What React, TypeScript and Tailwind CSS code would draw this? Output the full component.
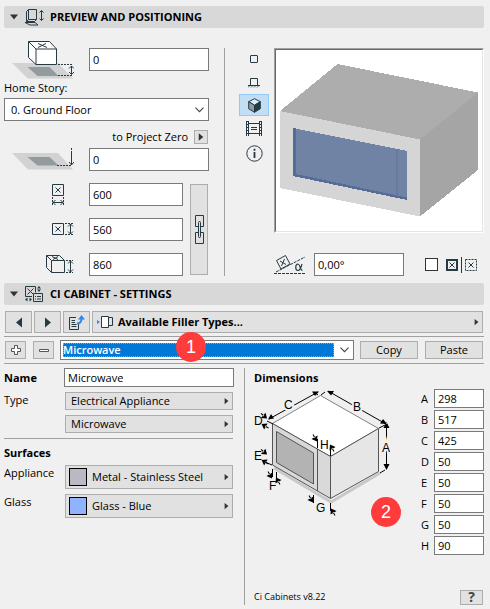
import { useState } from "react";
import type { ReactNode } from "react";

function Triangle({ dir, className = "" }: { dir: "left" | "right" | "down"; className?: string }) {
  const d = { left: "M7 0v10L1 5z", right: "M1 0v10l6-5z", down: "M0 2.500h8l-4 5z" }[dir];
  return (
    <svg viewBox="0 0 8 10" className={`shrink-0 ${className}`} fill="currentColor" aria-hidden="true">
      <path d={d} />
    </svg>
  );
}

function Chevron() {
  return (
    <svg viewBox="0 0 9 6" className="pointer-events-none h-[6px] w-[9px] shrink-0" fill="none" stroke="#444" strokeWidth="1.1" aria-hidden="true">
      <path d="M.5.7l4 4 4-4" />
    </svg>
  );
}

function SectionHeader({ title, icon }: { title: string; icon: ReactNode }) {
  return (
    <h2>
      <button type="button" className="flex h-[22px] w-full items-center rounded-[2px] bg-[#d8d8d8] pl-[6px] text-left font-bold">
        <Triangle dir="down" className="h-[10px] w-2 text-[#333]" />
        <span className="flex w-8 shrink-0 justify-center">{icon}</span>
        {title}
      </button>
    </h2>
  );
}

function NumberField({ label, value, className }: { label: string; value: string; className: string }) {
  return (
    <input
      type="text"
      aria-label={label}
      defaultValue={value}
      className={`h-[23px] min-w-0 border border-[#7a7a7a] bg-white px-[3px] outline-none ${className}`}
    />
  );
}

function MenuButton({ children, label, className }: { children: ReactNode; label?: string; className: string }) {
  return (
    <button type="button" aria-label={label} className={`flex min-w-0 flex-1 items-center border border-[#adadad] bg-[#e1e1e1] pr-[3px] text-left ${className}`}>
      <span className="flex flex-1 items-center">{children}</span>
      <Triangle dir="right" className="h-2 w-[5px] text-[#333]" />
    </button>
  );
}

const ink = "#263a44";

function PositionIcon() {
  return (
    <svg width="19" height="17" viewBox="0 0 19 17" fill="none" stroke={ink} aria-hidden="true">
      <path d="M3.5.5h8v10h-8zM3.5.5l-2 2v10l2-2M1.5 12.5h8l2-2" />
      <path d="M0 13.5h10l3 2.500H5z" />
      <path d="M16.500 1.500v10M14.500 3.500l2-2 2 2M14.500 9.500l2 2 2-2" />
    </svg>
  );
}

function CabinetIcon() {
  return (
    <svg width="18" height="17" viewBox="0 0 18 17" fill="none" stroke={ink} aria-hidden="true">
      <path d="M7 10.500H.5V.5h10v6M2.500 2.500l6 6M8.500 2.500l-6 6" />
      <path d="M8.500 7.500h9v8h-9zM10 10.500h1M12 10.500h4M10 13h1M12 13h4" />
      <path d="M14 0l2 2.500h-4zM14 6l2-2.500h-4zM0 13.500l2.500-2v4zM7 13.500l-2.500-2v4z" fill={ink} stroke="none" />
    </svg>
  );
}

function StoryIcon() {
  return (
    <svg width="62" height="38" viewBox="0 0 62 38" fill="none" stroke={ink} className="shrink-0" aria-hidden="true">
      <path d="M0 22h46l15 15.500H16z" fill="#d2d2d2" stroke="none" />
      <path d="M15.500 26h22l9 9h-21z" fill="#939b9f" stroke="none" />
      <path d="M16.500.500h21l7 7.500v15.500h-20.500l-7.500-7z" fill="#fff" />
      <path d="M16.500.500l7.500 7.500h20.500M24 8v15.500M26 2.500l9 4M34 2.500l-8 4" />
      <path d="M46 23.500h14M46 34.500h14" strokeDasharray="2 1" />
      <path d="M59.500 25v8M57 27.500l2.500-2.500 2.500 2.500M57 31l2.500 2.500 2.500-2.500" />
    </svg>
  );
}

function ZeroIcon() {
  return (
    <svg width="62" height="23" viewBox="0 0 62 23" fill="none" stroke={ink} className="shrink-0" aria-hidden="true">
      <path d="M0 5h46l15 16.500H16z" fill="#d2d2d2" stroke="none" />
      <path d="M15.500 9h22l9 8.500h-21z" fill="#939b9f" stroke="none" />
      <path d="M45 17.500h14" strokeDasharray="2 1" />
      <path d="M59.500 0v5" strokeDasharray="2 1" />
      <path d="M59.500 5v12M57 14l2.500 3 2.500-3" />
    </svg>
  );
}

function WidthIcon() {
  return (
    <svg width="12" height="21" viewBox="0 0 12 21" fill="none" stroke={ink} aria-hidden="true">
      <path d="M.5.500h11v11H.500zM3.500 3.500l5 5M8.500 3.500l-5 5M1 18.500h10M3.500 16L1 18.500 3.500 21M8.500 16l2.500 2.500L8.500 21" />
      <path d="M.500 13v8M11.500 13v8" strokeDasharray="2 1" />
    </svg>
  );
}

function DepthIcon() {
  return (
    <svg width="22" height="13" viewBox="0 0 22 13" fill="none" stroke={ink} aria-hidden="true">
      <path d="M.5.500h11v11H.500zM3.500 3.500l5 5M8.500 3.500l-5 5M18.500 1v10M16 3.500L18.500 1 21 3.500M16 8.500l2.500 2.500L21 8.500" />
      <path d="M13 .5h8M13 11.500h8" strokeDasharray="2 1" />
    </svg>
  );
}

function HeightIcon() {
  return (
    <svg width="28" height="19" viewBox="0 0 28 19" fill="none" stroke={ink} aria-hidden="true">
      <path d="M.500.500h13l5 5v12h-13l-5-5zM.500.500l5 5h13M5.500 5.500v12M6 1.500l6 3M12 1.500l-5 3M24.500 6v11M22 8.500L24.500 6 27 8.500M22 14.500l2.500 2.500 2.500-2.500" />
      <path d="M20 5.500h7M20 17.500h7" strokeDasharray="2 1" />
    </svg>
  );
}

function ChainIcon() {
  return (
    <svg width="9" height="29" viewBox="0 0 9 29" fill="none" stroke={ink} className="shrink-0" aria-hidden="true">
      <path d="M3 11.500H.500V.500h8v11H6M3 17.500H.500v11h8v-11H6" />
      <path d="M3.500 21.500V7.500l1-1.500 1 1.500v14l-1 1.500z" />
    </svg>
  );
}

function AngleIcon() {
  return (
    <svg width="31" height="19" viewBox="0 0 31 19" fill="none" stroke={ink} className="shrink-0" aria-hidden="true">
      <path d="M0 18.500h31M2 17L31 2" strokeDasharray="3 1" />
      <path d="M2.500 5.500l9-5 4.500 8.500-9 5zM6 6l6 3.500M10.500 4l-3 7" />
      <path d="M28 9c-1 4-2.500 6.500-4 6.500-3 0-3-6.500 0-6.500 2.200 0 2 6.500 4.500 6.500" strokeWidth="1.200" />
    </svg>
  );
}

const views: { name: string; size: string; icon: ReactNode }[] = [
  {
    name: "2D symbol",
    size: "h-[22px]",
    icon: (
      <svg width="8" height="8" viewBox="0 0 8 8" fill="none" stroke={ink} aria-hidden="true">
        <rect x=".5" y=".5" width="7" height="7" rx=".5" />
      </svg>
    ),
  },
  {
    name: "Elevation",
    size: "h-6",
    icon: (
      <svg width="12" height="11" viewBox="0 0 12 11" fill="none" stroke={ink} aria-hidden="true">
        <path d="M2.500 8V1.500h7V8M0 8.500h12" />
        <path d="M0 10.500l2-2M3 10.500l2-2M6 10.500l2-2M9 10.500l2-2" strokeWidth=".8" />
      </svg>
    ),
  },
  {
    name: "3D view",
    size: "h-[22px]",
    icon: (
      <svg width="13" height="15" viewBox="0 0 13 15" stroke={ink} strokeLinejoin="round" aria-hidden="true">
        <path d="M6.500.700l5.800 3-5.800 3.600L.700 3.700z" fill="#d9edfc" />
        <path d="M.700 3.700l5.800 3.600v7L.700 10.700z" fill="#939b9f" />
        <path d="M12.300 3.700L6.500 7.300v7l5.800-3.600z" fill={ink} />
      </svg>
    ),
  },
  {
    name: "Preview picture",
    size: "h-6",
    icon: (
      <svg width="16" height="15" viewBox="0 0 16 15" fill="none" stroke={ink} aria-hidden="true">
        <path d="M.500 0v15M2.500 0v15M13.500 0v15M15.500 0v15M3 2.500h10M3 12.500h10M5 6.500h6M5 8.500h6" />
        <path d="M1.500 0v15M14.500 0v15" strokeDasharray="1 2" />
      </svg>
    ),
  },
  {
    name: "Information",
    size: "h-[26px]",
    icon: (
      <svg width="17" height="17" viewBox="0 0 17 17" fill="none" stroke={ink} aria-hidden="true">
        <circle cx="8.500" cy="8.500" r="7.700" />
        <path d="M8.500 7v6M8.500 3.800v2" strokeWidth="1.800" />
      </svg>
    ),
  },
];

function Preview3D() {
  return (
    <div className="h-[185px] border border-b-white border-l-[#a0a0a0] border-r-white border-t-[#a0a0a0]">
      <div className="h-full border border-b-[#e3e3e3] border-l-[#696969] border-r-[#e3e3e3] border-t-[#696969] bg-white">
        <svg viewBox="276 50 206 181" className="h-full w-full" shapeRendering="crispEdges" role="img" aria-label="Microwave preview">
          <path d="M337.500 64L478 92.500 420 139.500 280 111z" fill="#adadad" />
          <path d="M280 111l140 28.500v77L280 188z" fill="#d5d5d5" />
          <path d="M420 139.500l58-47V170l-58 46.500z" fill="#a5a5a5" />
          <path d="M293 128l114 23v49l-114-24z" fill="#7083a4" />
          <path d="M293 128l3 .6V174l111 23.500v2.500l-114-24z" fill="#566c98" />
          <path d="M396 149h2v47h-2z" fill="#677a9d" />
        </svg>
      </div>
    </div>
  );
}

const dimensionArrows: [number, number, number, number][] = [
  [268, 418, 317, 391],
  [327, 390, 385, 423],
  [385.5, 424, 385.5, 468],
];

const ticks: [number, number, number][] = [
  [263, 415, 40], [264, 425, 210], [263, 451, 40], [264, 461, 210],
  [269, 474, 60], [277, 480, 240], [314, 437, 60], [331, 447, 240],
  [310, 498, 60], [332, 511, 240],
];

function DimensionDrawing() {
  return (
    <svg width="136" height="128" viewBox="253 388 136 128" fill="none" stroke="#555" role="img" aria-label="Microwave dimensions A to H">
      <path d="M273 467l57 34 49-29" stroke="#c8c8c8" strokeWidth="3" />
      <path d="M271.500 422.500l48-28 58 33-48 28z" fill="#fff" stroke="#808080" />
      <path d="M271.500 422.500l58 33v42l-58-33.500z" fill="#d9d9d9" />
      <path d="M275.500 430.500l37 21.500v31l-37-21.500z" fill="#b3b3b3" />
      <path d="M316.500 448v42" />
      <path d="M329.500 455.500l48-28v43l-48 27z" fill="#e6e6e6" />
      <g stroke="#000">
        {dimensionArrows.map(([x1, y1, x2, y2]) => (
          <path key={`${x1}-${y1}`} d={`M${x1} ${y1}L${x2} ${y2}`} />
        ))}
        <path d="M313 391l4 3M324 391l-4 3M378 427l6-3M379 472l5-3M266 420l6 3M264 461l7 3M271.500 468v8M275.500 471v8M316.500 438v9M329.500 446v9M312.500 494v8M329.500 502v8" />
      </g>
      <g fill="#000" stroke="none">
        <path d="M267 418.500l3-5.500 3 4.500zM318 390.500l-7 0 3 4.500zM326 390l7 0-3 4.500zM386 423l-7-.5 3-4.500zM385.500 421l-3 6h6zM385.500 469l-3-6h6z" />
        {ticks.map(([x, y, a]) => (
          <g key={`${x}-${y}`} transform={`translate(${x} ${y}) rotate(${a})`}>
            <path d="M4 0l-5-3.500v7zM-4-.5h4v1h-4z" />
          </g>
        ))}
      </g>
      <g stroke="#f0f0f0" strokeWidth="4" paintOrder="stroke" fill="#000" className="font-['Liberation_Sans',Arial,sans-serif] text-xs">
        <text x="283" y="408">C</text>
        <text x="352" y="410">B</text>
        <text x="381" y="451">A</text>
      </g>
      <g fill="#000" stroke="none" className="font-['Liberation_Sans',Arial,sans-serif] text-xs">
        <text x="253" y="424">D</text>
        <text x="253" y="459">E</text>
        <text x="268" y="489">F</text>
        <text x="319" y="448">H</text>
        <text x="315" y="511">G</text>
      </g>
    </svg>
  );
}

function Badge({ children, className }: { children: ReactNode; className: string }) {
  return (
    <span className={`absolute flex size-[30px] items-center justify-center rounded-full bg-[#ff3b3b] font-['Liberation_Sans',Arial,sans-serif] text-lg text-white ${className}`}>
      {children}
    </span>
  );
}

const dimensions = [
  ["A", "298"], ["B", "517"], ["C", "425"], ["D", "50"],
  ["E", "50"], ["F", "50"], ["G", "50"], ["H", "90"],
];

const toolButton = "flex shrink-0 items-center justify-center border border-[#adadad] bg-[#e1e1e1]";

export default function App() {
  const [mirrored, setMirrored] = useState(false);

  return (
    <main className="min-h-screen bg-[#f0f0f0] pb-1 pl-1 pr-[6px] pt-[6px] font-['Open_Sans','Noto_Sans',sans-serif] text-[11px] leading-4 text-black">
      <SectionHeader title="PREVIEW AND POSITIONING" icon={<PositionIcon />} />

      <section className="flex pb-[7px] pt-5">
        <div className="w-[205px] shrink-0">
          <div className="flex h-[23px] items-center justify-between pl-2">
            <StoryIcon />
            <NumberField label="Height to home story" value="0" className="w-[120px]" />
          </div>
          <label htmlFor="story" className="mt-[9px] block">Home Story:</label>
          <div className="mt-[2px] flex h-[23px] items-center border border-[#7a7a7a] bg-white pr-1">
            <select id="story" className="-mr-[9px] h-full flex-1 appearance-none bg-transparent px-[6px] outline-none">
              <option>0. Ground Floor</option>
            </select>
            <Chevron />
          </div>
          <div className="mt-[9px] flex h-[14px] items-center justify-end gap-[6px] pr-px">
            <span>to Project Zero</span>
            <button type="button" aria-label="Choose reference level" className={`size-[14px] ${toolButton}`}>
              <Triangle dir="right" className="h-2 w-[6px] text-[#333]" />
            </button>
          </div>
          <div className="mt-[4px] flex h-[23px] items-center justify-between pl-2">
            <ZeroIcon />
            <NumberField label="Height to project zero" value="0" className="w-[120px]" />
          </div>
          <div className="mt-3 flex">
            <div className="flex min-w-0 flex-1 flex-col gap-3">
              <div className="flex items-center pl-12">
                <span className="flex w-[37px] shrink-0"><WidthIcon /></span>
                <NumberField label="Width" value="600" className="w-0 flex-1" />
              </div>
              <div className="flex items-center pl-12">
                <span className="flex w-[37px] shrink-0"><DepthIcon /></span>
                <NumberField label="Depth" value="560" className="w-0 flex-1" />
              </div>
              <div className="flex items-center pl-[42px]">
                <span className="flex w-[43px] shrink-0"><HeightIcon /></span>
                <NumberField label="Height" value="860" className="w-0 flex-1" />
              </div>
            </div>
            <button type="button" aria-label="Keep proportions" className={`my-px ml-[7px] mr-px w-[18px] ${toolButton}`}>
              <ChainIcon />
            </button>
          </div>
        </div>

        <div className="ml-[15px] w-px bg-[#a0a0a0]" />

        <div className="ml-[14px] flex min-w-0 flex-1 flex-col justify-between">
          <div className="flex gap-[5px]">
            <div className="flex w-[30px] shrink-0 flex-col">
              {views.map(({ name, size, icon }) => (
                <button
                  key={name}
                  type="button"
                  aria-label={name}
                  className={`flex items-center justify-center ${size} ${name === "3D view" ? "border border-[#90c8f6] bg-[#c2def4]" : ""}`}
                >
                  {icon}
                </button>
              ))}
            </div>
            <div className="min-w-0 flex-1"><Preview3D /></div>
          </div>
          <div className="flex items-center pl-[35px] pr-[7px]">
            <AngleIcon />
            <NumberField label="Rotation angle" value="0,00°" className="ml-[9px] w-[90px]" />
            <label className="ml-auto flex items-center">
              <input
                type="checkbox"
                aria-label="Mirror"
                checked={mirrored}
                onChange={() => setMirrored(!mirrored)}
                className="size-[13px] appearance-none border border-[#333] bg-white checked:bg-[#0078d7]"
              />
              <svg width="31" height="16" viewBox="0 0 31 16" fill="none" stroke={ink} className="ml-2" aria-hidden="true">
                <path d="M1 3h10v10H1z" strokeWidth="2" />
                <path d="M3.500 5.500l5 5M8.500 5.500l-5 5M22.500 5.500l5 5M27.500 5.500l-5 5M15.500 0v16" />
                <path d="M19.500 2.500h11v11h-11z" strokeDasharray="2 1" />
              </svg>
            </label>
          </div>
        </div>
      </section>

      <SectionHeader title="CI CABINET - SETTINGS" icon={<CabinetIcon />} />

      <div className="flex h-8 items-start gap-[2px] border-b border-[#a0a0a0] pl-px pr-px pt-[6px]">
        <button type="button" aria-label="Previous page" className={`h-[22px] w-[27px] ${toolButton}`}>
          <Triangle dir="left" className="h-[11px] w-[8px] text-[#263a44]" />
        </button>
        <button type="button" aria-label="Next page" className={`h-[22px] w-[27px] ${toolButton}`}>
          <Triangle dir="right" className="h-[11px] w-[8px] text-[#263a44]" />
        </button>
        <button type="button" aria-label="Transfer settings" className={`h-[22px] w-[27px] ${toolButton}`}>
          <svg width="16" height="15" viewBox="0 0 16 15" fill="none" stroke={ink} aria-hidden="true">
            <path d="M7 2.500H.500v12h9V9M2.500 5.500H6M2.500 7.500H6M2.500 9.500h5M2.500 11.500h5" />
            <path d="M8 8.500c3 0 4.500-1 4.500-5" stroke="#3187ea" strokeWidth="2" />
            <path d="M12.500 0L16 4.500H9z" fill="#3187ea" stroke="none" />
          </svg>
        </button>
        <MenuButton className="h-[22px] font-bold">
          <svg width="16" height="12" viewBox="0 0 16 12" fill="none" stroke={ink} className="ml-1 mr-[5px]" aria-hidden="true">
            <path d="M0 4l3 2-3 2z" fill="#3187ea" stroke="none" />
            <path d="M11.500 1.500h4v8h-4z" fill="#e1e1e1" />
            <path d="M4.500.500h7v11h-7z" fill="#fff" />
          </svg>
          Available Filler Types...
        </MenuButton>
      </div>

      <div className="flex h-[27px] items-center border-b border-[#a0a0a0] pl-px">
        <button type="button" aria-label="Add filler" className={`h-[18px] w-[21px] ${toolButton}`}>
          <svg width="10" height="10" viewBox="0 0 10 10" fill="#fff" stroke="#555" aria-hidden="true">
            <path d="M3.500.500h3v3h3v3h-3v3h-3v-3h-3v-3h3z" />
          </svg>
        </button>
        <button type="button" aria-label="Remove filler" className={`ml-[7px] h-[18px] w-[21px] ${toolButton}`}>
          <svg width="10" height="3" viewBox="0 0 10 3" fill="#fff" stroke="#555" aria-hidden="true">
            <path d="M.500.500h9v2h-9z" />
          </svg>
        </button>
        <div className="relative ml-[6px] flex h-5 min-w-0 flex-1 items-center border border-[#7a7a7a] bg-white pl-[2px] pr-1">
          <select aria-label="Filler" className="mr-[6px] h-[14px] min-w-0 flex-1 appearance-none bg-[#0078d7] font-semibold leading-[14px] text-white outline-1 -outline-offset-1 outline-dotted outline-[#ff8728]">
            <option>Microwave</option>
          </select>
          <Chevron />
          <Badge className="-top-[9px] left-[115px]">1</Badge>
        </div>
        <button type="button" className={`ml-[6px] h-[18px] w-[58px] ${toolButton}`}>Copy</button>
        <button type="button" className={`ml-[7px] mr-px h-[18px] w-[58px] ${toolButton}`}>Paste</button>
      </div>

      <section className="flex pt-1">
        <div className="w-[230px] shrink-0">
          <div className="flex items-center">
            <label htmlFor="name" className="w-[60px] font-bold">Name</label>
            <input id="name" type="text" defaultValue="Microwave" className="h-[19px] min-w-0 flex-1 border border-[#7a7a7a] bg-white px-[3px] outline-none" />
          </div>
          <div className="mt-[5px] flex items-start pr-px">
            <span className="w-[61px] shrink-0">Type</span>
            <div className="flex flex-1 flex-col gap-[5px]">
              <div className="flex"><MenuButton className="h-[18px] pl-[5px]">Electrical Appliance</MenuButton></div>
              <div className="flex"><MenuButton className="h-[18px] pl-[5px]">Microwave</MenuButton></div>
            </div>
          </div>
          <div className="mr-px mt-[5px] border-t border-[#a0a0a0] pt-[6px]">
            <h3 className="font-bold">Surfaces</h3>
            <div className="mt-1 flex items-start">
              <span className="w-[61px] shrink-0">Appliance</span>
              <MenuButton label="Appliance surface: Metal - Stainless Steel" className="h-6 pl-[3px]">
                <span className="mr-[5px] size-[18px] border border-black bg-[#bab8c4]" />
                Metal - Stainless Steel
              </MenuButton>
            </div>
            <div className="mt-[5px] flex items-start">
              <span className="w-[61px] shrink-0">Glass</span>
              <MenuButton label="Glass surface: Glass - Blue" className="h-6 pl-[3px]">
                <span className="mr-[5px] size-[18px] border border-black bg-[#8fb3fc]" />
                Glass - Blue
              </MenuButton>
            </div>
          </div>
        </div>

        <div className="ml-[10px] w-px bg-[#a0a0a0]" />

        <div className="ml-[9px] flex min-w-0 flex-1 flex-col">
          <h3 className="mt-[2px] font-bold">Dimensions</h3>
          <div className="mt-[3px] flex items-start justify-between">
            <div className="relative">
              <DimensionDrawing />
              <Badge className="left-[117px] top-[108px]">2</Badge>
            </div>
            <div className="flex flex-col gap-[2px]">
              {dimensions.map(([name, value]) => (
                <label key={name} className="flex items-center">
                  <span className="w-[13px]">{name}</span>
                  <input type="text" defaultValue={value} className="h-[19px] w-[50px] border border-[#7a7a7a] bg-white px-[3px] outline-none" />
                </label>
              ))}
            </div>
          </div>
          <div className="mt-[34px] flex items-center justify-between pr-px">
            <span className="text-[9px]">Ci Cabinets v8.22</span>
            <button type="button" aria-label="Help" className={`h-[15px] w-[23px] text-sm font-bold text-[#444] ${toolButton}`}>?</button>
          </div>
        </div>
      </section>
    </main>
  );
}
